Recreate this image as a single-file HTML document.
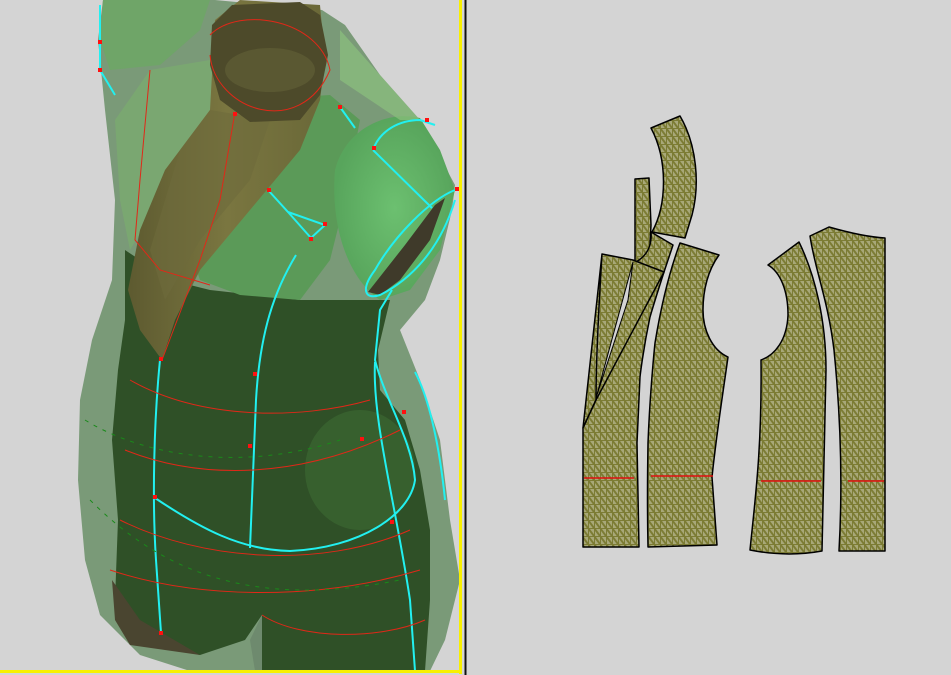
<!DOCTYPE html>
<html><head><style>
html,body{margin:0;padding:0;background:#d4d4d4;width:951px;height:675px;overflow:hidden}
svg{display:block}
</style></head><body>
<svg width="951" height="675" viewBox="0 0 951 675" xmlns="http://www.w3.org/2000/svg">
<rect width="951" height="675" fill="#d4d4d4"/>
<defs>
<pattern id="mesh" width="6" height="8" patternUnits="userSpaceOnUse">
<rect width="6" height="8" fill="#a8a878"/>
<path d="M0 0L6 8M0 0H6M0 0V8" stroke="#7c7c34" stroke-width="2" fill="none"/>
</pattern>
<clipPath id="lp"><rect x="0" y="0" width="460" height="671"/></clipPath>
<radialGradient id="sh" cx="0.5" cy="0.5" r="0.5"><stop offset="0" stop-color="#6cc070"/><stop offset="1" stop-color="#58a55c"/></radialGradient>
<linearGradient id="tan" x1="0" y1="0" x2="1" y2="0"><stop offset="0" stop-color="#5d5a30"/><stop offset="0.5" stop-color="#7a7640"/><stop offset="1" stop-color="#6a6838"/></linearGradient>
</defs>
<g clip-path="url(#lp)">
<path d="M103 0 L215 0 L322 10 L345 25 L380 75 L420 120 L455 185 L452 210 L440 260 L425 300 L400 330 L420 380 L440 440 L450 520 L460 580 L445 640 L430 671 L190 671 L140 655 L100 615 L85 560 L78 480 L80 400 L92 340 L112 280 L115 200 L105 110 L98 40 Z" fill="#7a9a78"/>
<path d="M125 250 L170 280 L210 290 L300 300 L390 300 L378 350 L380 390 L405 420 L420 470 L430 530 L430 600 L425 671 L262 671 L262 615 L245 640 L200 655 L140 640 L115 600 L118 520 L112 440 L118 370 L125 320 Z" fill="#2f5027"/>
<ellipse cx="360" cy="470" rx="55" ry="60" fill="#3e6b33" opacity="0.6"/>
<path d="M112 580 L140 620 L200 655 L130 645 L115 620 Z" fill="#4a4530"/>
<path d="M262 615 L262 671 L255 671 L250 640 Z" fill="#6e8a6e"/>
<path d="M103 0 L210 0 L200 30 L160 65 L110 70 L100 40 Z" fill="#6fa568"/>
<path d="M150 70 L210 60 L230 110 L200 150 L160 200 L130 250 L120 200 L115 120 Z" fill="#7aa870" opacity="0.9"/>
<path d="M250 100 L330 95 L360 120 L345 200 L330 260 L300 300 L240 295 L200 280 L190 250 L240 200 L300 150 Z" fill="#5b9a58"/>
<path d="M215 20 L240 0 L320 5 L325 60 L320 100 L300 150 L250 210 L200 270 L175 320 L162 360 L140 330 L128 290 L140 230 L165 170 L210 110 Z" fill="url(#tan)"/>
<path d="M180 150 L210 110 L270 120 L250 180 L200 240 L165 300 L150 250 Z" fill="#6e6a3c" opacity="0.6"/>
<path d="M212 25 L232 5 L300 2 L320 15 L328 55 L320 95 L300 120 L250 122 L220 100 L210 65 Z" fill="#4d4a2a"/>
<ellipse cx="270" cy="70" rx="45" ry="22" fill="#5a5832"/>
<path d="M335 170 C345 130 385 110 420 118 L440 150 L455 190 L440 250 L410 290 L380 300 C350 280 330 230 335 170 Z" fill="url(#sh)"/>
<path d="M340 30 L380 75 L420 120 L400 120 L370 100 L340 80 Z" fill="#8cc07e" opacity="0.7"/>
<path d="M368 292 L405 245 L435 205 L445 198 L430 240 L400 280 L380 295 Z" fill="#3f3a2a"/>
<g fill="none" stroke="#22f0f0" stroke-width="2">
<path d="M160 360 C154 420 152 500 156 560 L161 633"/>
<path d="M296 255 C275 290 260 330 256 400 L250 548"/>
<path d="M155 498 C200 528 240 550 290 551 C360 548 410 515 415 480 C412 440 385 400 375 360 L380 310 L392 290"/>
<path d="M375 362 C372 420 395 500 410 600 L415 671"/>
<path d="M340 107 L355 128"/>
<path d="M373 150 C380 130 400 120 420 120 L435 125"/>
<path d="M373 150 L432 208"/>
<path d="M455 190 C430 200 395 235 375 270 C360 290 365 300 380 295 C410 280 440 250 455 200"/>
<path d="M100 5 L100 70 L115 95"/>
<path d="M268 190 L288 212 L325 225 L311 238 L288 212"/>
<path d="M415 372 C430 400 440 450 445 500"/>
</g>
<g fill="none" stroke="#e02818" stroke-width="1">
<path d="M235 112 L220 200 L200 260 L162 360"/>
<path d="M210 55 C215 110 300 140 330 70 C320 20 240 5 210 35"/>
<path d="M150 70 L140 180 L135 240 L160 270 L210 285"/>
<path d="M130 380 C200 420 300 420 370 400"/>
<path d="M125 450 C200 480 300 480 400 430"/>
<path d="M120 520 C200 560 320 570 410 530"/>
<path d="M110 570 C200 600 320 600 420 570"/>
<path d="M262 615 C300 640 380 640 425 620"/>
</g>
<g fill="none" stroke="#1a8a1a" stroke-width="1" stroke-dasharray="4 6">
<path d="M85 420 C150 460 250 470 340 440"/>
<path d="M90 500 C160 570 250 610 400 580"/>
</g>
<g fill="#ff1010">
<rect x="159" y="357" width="4" height="4"/><rect x="253" y="372" width="4" height="4"/><rect x="248" y="444" width="4" height="4"/>
<rect x="153" y="495" width="4" height="4"/><rect x="159" y="631" width="4" height="4"/><rect x="360" y="437" width="4" height="4"/>
<rect x="390" y="520" width="4" height="4"/><rect x="402" y="410" width="4" height="4"/><rect x="372" y="146" width="4" height="4"/>
<rect x="267" y="188" width="4" height="4"/><rect x="323" y="222" width="4" height="4"/><rect x="309" y="237" width="4" height="4"/>
<rect x="338" y="105" width="4" height="4"/><rect x="425" y="118" width="4" height="4"/><rect x="455" y="187" width="4" height="4"/>
<rect x="98" y="40" width="4" height="4"/><rect x="98" y="68" width="4" height="4"/><rect x="233" y="112" width="4" height="4"/>
</g>
</g>
<rect x="459" y="0" width="3" height="674" fill="#f8f000"/>
<rect x="0" y="670" width="462" height="3" fill="#f8f000"/>
<rect x="464.5" y="0" width="2" height="675" fill="#111"/>
<g fill="url(#mesh)" stroke="#000" stroke-width="1.5" stroke-linejoin="round">
<path d="M651 128 L680 116 C697 145 700 185 692 215 L685 238 L652 232 C667 205 668 160 651 128 Z"/>
<path d="M635 179 L649 178 L651 225 L649 263 L635 262 Z"/>
<path d="M651 232 L673 245 L664 272 L636 262 C648 255 652 245 651 232 Z"/>
<path d="M602 254 L633 260 L664 272 C640 330 625 380 596 400 L583 428 Z M602 254 C598 320 596 370 596 400"/>
<path d="M664 272 C655 300 650 317 650 317 C643 350 640 377 640 377 L637 443 L639 547 L583 547 L583 428 L596 400 Z"/>
<path d="M680 243 L719 255 C708 270 703 290 703 310 C703 330 712 350 728 357 C722 400 717 430 712 477 L717 545 L648 547 C647 500 648 443 648 443 C650 390 655 343 655 343 C662 300 670 270 680 243 Z"/>
<path d="M768 265 L799 242 C815 275 826 320 826 370 L822 551 C800 555 775 555 750 550 C755 500 762 450 761 360 C775 355 787 340 788 315 C788 290 780 272 768 265 Z"/>
<path d="M810 236 L829 227 C850 233 868 237 885 238 L885 551 L839 551 C843 480 840 410 834 350 C828 300 815 270 810 236 Z"/>
</g>
<path d="M633 262 L596 398 L628 300 Z" fill="#d4d4d4" stroke="#000" stroke-width="1"/>
<g stroke="#e01010" stroke-width="1.6">
<line x1="584" y1="478" x2="634" y2="478"/>
<line x1="651" y1="476" x2="713" y2="476"/>
<line x1="761" y1="481" x2="821" y2="481"/>
<line x1="848" y1="481" x2="884" y2="481"/>
</g>
</svg>
</body></html>
